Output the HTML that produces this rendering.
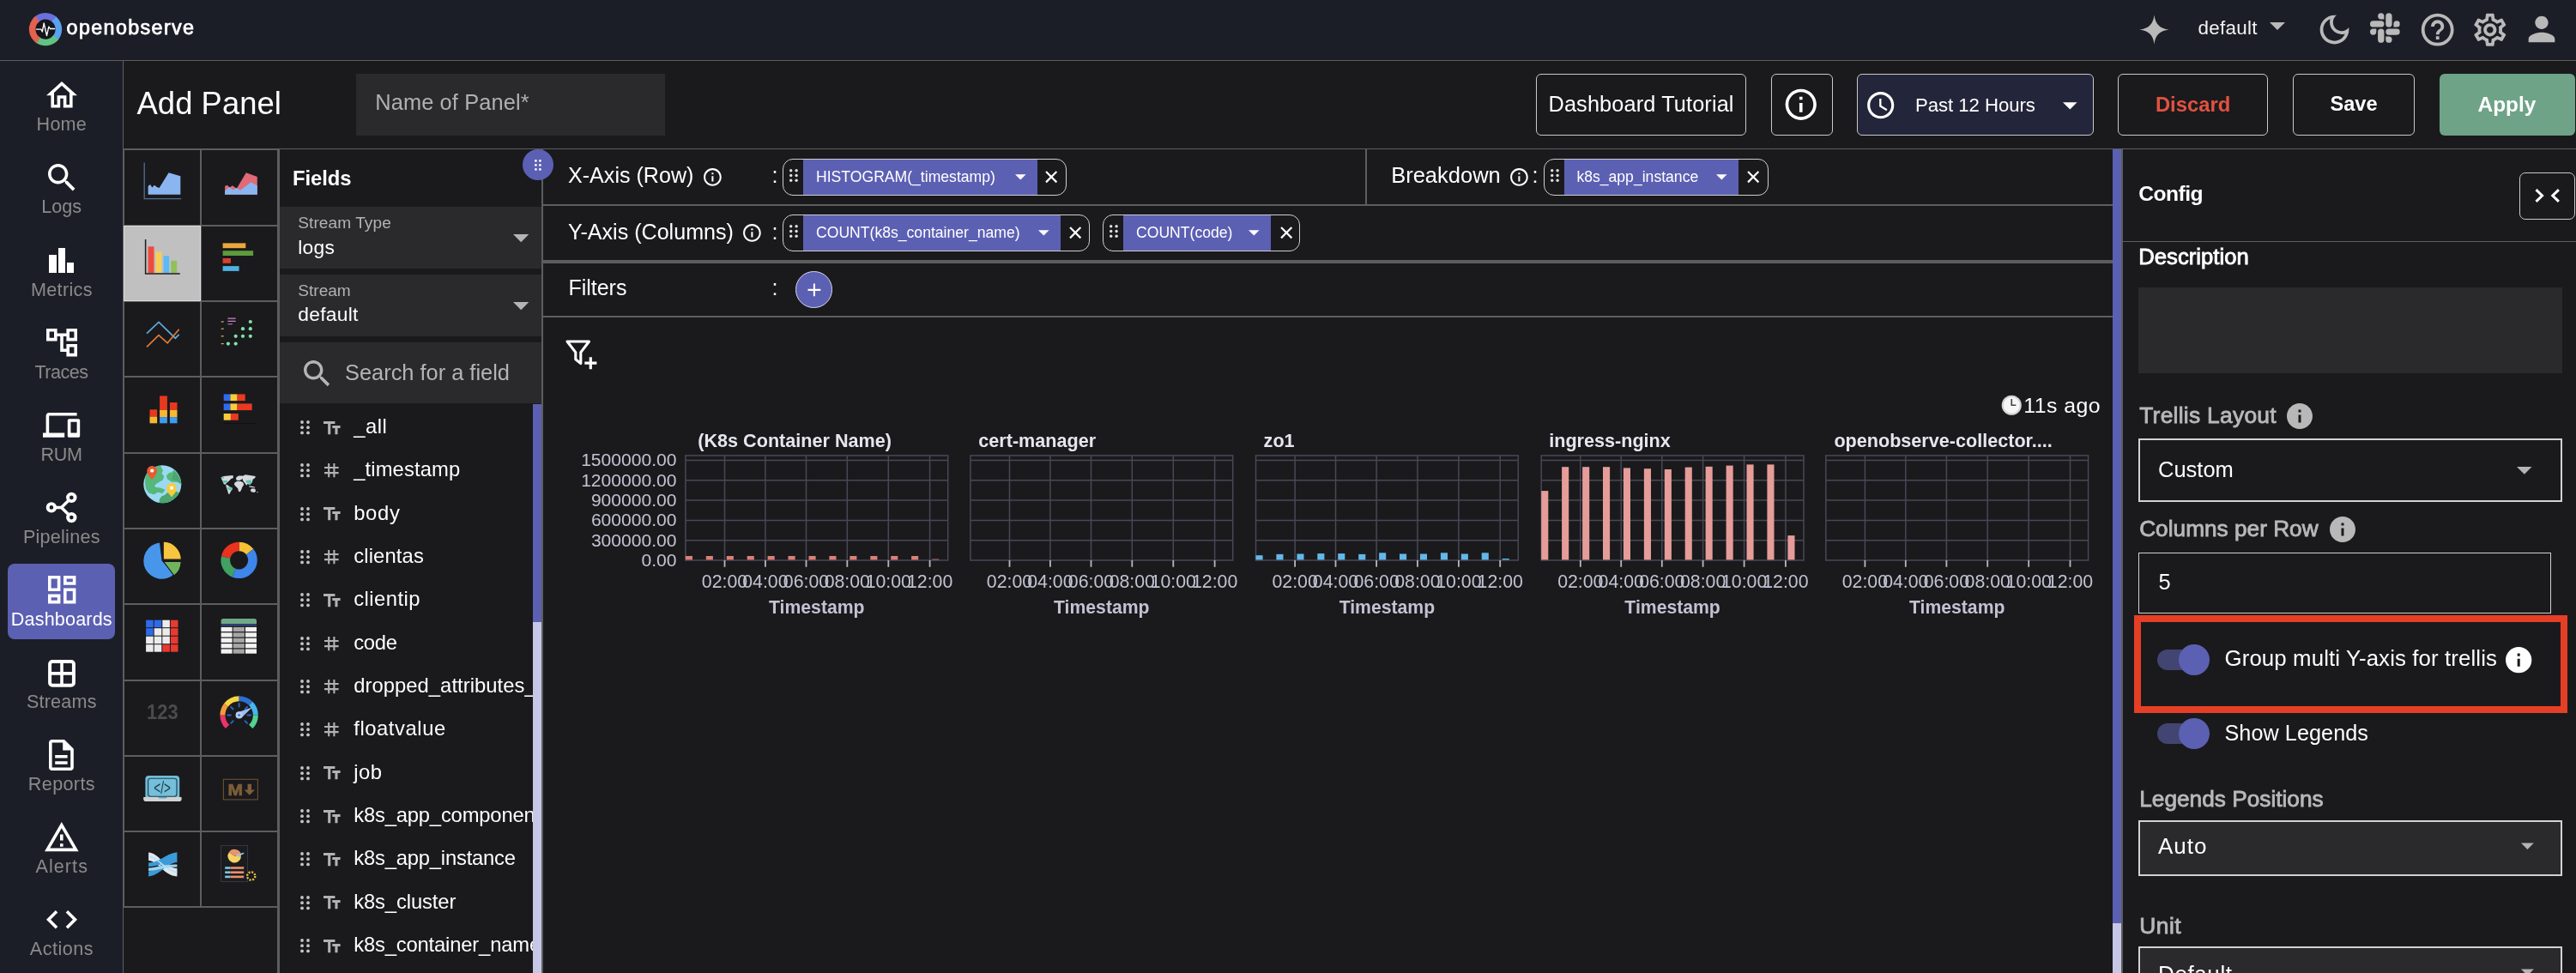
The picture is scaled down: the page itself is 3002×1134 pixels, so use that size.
<!DOCTYPE html>
<html lang="en"><head><meta charset="utf-8"><title>OpenObserve - Add Panel</title>
<style>
html,body{margin:0;padding:0;}
body{width:3002px;height:1134px;overflow:hidden;background:#1a1a1d;font-family:"Liberation Sans", sans-serif;position:relative;}
.a{position:absolute;box-sizing:border-box;}
.t{position:absolute;white-space:nowrap;line-height:1;}
#root{position:absolute;left:0;top:0;width:3002px;height:1134px;will-change:transform;}
svg{display:block;overflow:visible;}
svg text{font-family:"Liberation Sans", sans-serif;}
</style></head><body><div id="root">
<!-- top bar -->
<div class="a" style="left:0.00px;top:0.00px;width:3002.00px;height:70.00px;background:#1c1e27;"></div>
<div class="a" style="left:0.00px;top:70.00px;width:3002.00px;height:1.00px;background:#5c5e5d;"></div>
<svg class="a" style="left:0;top:0" width="120" height="70" viewBox="0 0 120 70"><circle cx="53.0" cy="34.1" r="18.2" fill="#15161c"/><path fill="#6c6fdc" d="M38.29 21.76A19.2 19.2 0 0 1 67.27 21.25L61.62 26.34A11.6 11.6 0 0 0 44.11 26.64Z"/><path fill="#5aa2f0" d="M65.34 19.39A19.2 19.2 0 0 1 65.34 48.81L60.46 42.99A11.6 11.6 0 0 0 60.46 25.21Z"/><path fill="#62c283" d="M68.13 45.92A19.2 19.2 0 0 1 40.15 48.37L45.24 42.72A11.6 11.6 0 0 0 62.14 41.24Z"/><path fill="#e2614f" d="M42.83 50.38A19.2 19.2 0 0 1 41.18 18.97L45.86 24.96A11.6 11.6 0 0 0 46.85 43.94Z"/><path fill="none" stroke="#fff" stroke-width="1.35" stroke-linejoin="round" stroke-linecap="round" d="M42.4 34.1H47.9L49.3 37L51.2 27L54.5 41.6L56.8 31.2L58.6 33.5H63.6"/></svg>
<span class="t" style="top:21.38px;font-size:23.3px;color:#fff;letter-spacing:1.377px;left:77.60px;-webkit-text-stroke:0.75px #fff;">openobserve</span>
<svg class="a" style="left:2493px;top:16.5px" width="35" height="35" viewBox="0 0 24 24"><path fill="#b9b9b9" d="M12 0.3C12.9 7.6 16.4 11.1 23.7 12C16.4 12.9 12.9 16.4 12 23.7C11.1 16.4 7.6 12.9 0.3 12C7.6 11.1 11.1 7.6 12 0.3Z"/></svg>
<span class="t" style="top:22.44px;font-size:22.4px;color:#f2f2f2;letter-spacing:0.29px;left:2561.50px;">default</span>
<svg class="a" style="left:2645px;top:25.7px" width="18" height="9" viewBox="0 0 10 5"><path fill="#b9b9b9" d="M0 0h10L5 5z"/></svg>
<svg class="a" style="left:2697.90px;top:12.20px" width="45" height="45" viewBox="0 0 24 24"><path fill="#b9b9b9" d="M9.37 5.51C9.19 6.15 9.1 6.82 9.1 7.5c0 4.08 3.32 7.4 7.4 7.4.68 0 1.35-.09 1.99-.27C17.45 17.19 14.93 19 12 19c-3.86 0-7-3.14-7-7 0-2.93 1.81-5.45 4.37-6.49zM12 3c-4.97 0-9 4.03-9 9s4.03 9 9 9 9-4.03 9-9c0-.46-.04-.92-.1-1.36-.98 1.37-2.58 2.26-4.4 2.26-2.98 0-5.4-2.42-5.4-5.4 0-1.81.89-3.42 2.26-4.4-.44-.06-.9-.1-1.36-.1z"/></svg>
<svg class="a" style="left:2762.3px;top:15px" width="34.7" height="35" viewBox="0 0 24 24" fill="#b9b9b9"><path d="M5.04 15.17a2.52 2.52 0 1 1-2.52-2.52h2.52zM6.31 15.17a2.52 2.52 0 0 1 5.04 0v6.31a2.52 2.52 0 0 1-5.04 0z"/><path d="M8.83 5.04a2.52 2.52 0 1 1 2.52-2.52v2.52zM8.83 6.31a2.52 2.52 0 0 1 0 5.04H2.52a2.52 2.52 0 0 1 0-5.04z"/><path d="M18.96 8.83a2.52 2.52 0 1 1 2.52 2.52h-2.52zM17.69 8.83a2.52 2.52 0 0 1-5.04 0V2.52a2.52 2.52 0 0 1 5.04 0z"/><path d="M15.17 18.96a2.52 2.52 0 1 1-2.52 2.52v-2.52zM15.17 17.69a2.52 2.52 0 0 1 0-5.04h6.31a2.52 2.52 0 0 1 0 5.04z"/></svg>
<svg class="a" style="left:2818.30px;top:11.70px" width="45.4" height="45.4" viewBox="0 0 24 24"><path fill="#b9b9b9" d="M11 18h2v-2h-2v2zm1-16C6.48 2 2 6.48 2 12s4.48 10 10 10 10-4.48 10-10S17.52 2 12 2zm0 18c-4.41 0-8-3.59-8-8s3.59-8 8-8 8 3.59 8 8-3.59 8-8 8zm0-14c-2.21 0-4 1.79-4 4h2c0-1.1.9-2 2-2s2 .9 2 2c0 2-3 1.75-3 5h2c0-2.25 3-2.5 3-5 0-2.21-1.79-4-4-4z"/></svg>
<svg class="a" style="left:2878.50px;top:11.50px" width="45.6" height="45.6" viewBox="0 0 24 24"><path fill="#b9b9b9" d="M19.43 12.98c.04-.32.07-.64.07-.98 0-.34-.03-.66-.07-.98l2.11-1.65c.19-.15.24-.42.12-.64l-2-3.46c-.09-.16-.26-.25-.44-.25-.06 0-.12.01-.17.03l-2.49 1c-.52-.4-1.08-.73-1.69-.98l-.38-2.65C14.46 2.18 14.25 2 14 2h-4c-.25 0-.46.18-.49.42l-.38 2.65c-.61.25-1.17.59-1.69.98l-2.49-1c-.06-.02-.12-.03-.18-.03-.17 0-.34.09-.43.25l-2 3.46c-.13.22-.07.49.12.64l2.11 1.65c-.04.32-.07.65-.07.98 0 .33.03.66.07.98l-2.11 1.65c-.19.15-.24.42-.12.64l2 3.46c.09.16.26.25.44.25.06 0 .12-.01.17-.03l2.49-1c.52.4 1.08.73 1.69.98l.38 2.65c.03.24.24.42.49.42h4c.25 0 .46-.18.49-.42l.38-2.65c.61-.25 1.17-.59 1.69-.98l2.49 1c.06.02.12.03.18.03.17 0 .34-.09.43-.25l2-3.46c.12-.22.07-.49-.12-.64l-2.11-1.65zm-1.98-1.71c.04.31.05.52.05.73 0 .21-.02.43-.05.73l-.14 1.13.89.7 1.08.84-.7 1.21-1.27-.51-1.04-.42-.9.68c-.43.32-.84.56-1.25.73l-1.06.43-.16 1.13-.2 1.35h-1.4l-.19-1.35-.16-1.13-1.06-.43c-.43-.18-.83-.41-1.23-.71l-.91-.7-1.06.43-1.27.51-.7-1.21 1.08-.84.89-.7-.14-1.13c-.03-.31-.05-.54-.05-.74s.02-.43.05-.73l.14-1.13-.89-.7-1.08-.84.7-1.21 1.27.51 1.04.42.9-.68c.43-.32.84-.56 1.25-.73l1.06-.43.16-1.13.2-1.35h1.39l.19 1.35.16 1.13 1.06.43c.43.18.83.41 1.23.71l.91.7 1.06-.43 1.27-.51.7 1.21-1.07.85-.89.7.14 1.13zM12 8c-2.21 0-4 1.79-4 4s1.79 4 4 4 4-1.79 4-4-1.79-4-4-4zm0 6c-1.1 0-2-.9-2-2s.9-2 2-2 2 .9 2 2-.9 2-2 2z"/></svg>
<svg class="a" style="left:2939.30px;top:11.30px" width="46" height="46" viewBox="0 0 24 24"><path fill="#b9b9b9" d="M12 12c2.21 0 4-1.79 4-4s-1.79-4-4-4-4 1.79-4 4 1.79 4 4 4zm0 2c-2.67 0-8 1.34-8 4v2h16v-2c0-2.66-5.33-4-8-4z"/></svg>
<!-- left nav -->
<div class="a" style="left:0.00px;top:71.00px;width:143.00px;height:1063.00px;background:#1c1e27;"></div>
<div class="a" style="left:143.00px;top:71.00px;width:1.00px;height:1063.00px;background:#5c5e5d;"></div>
<svg class="a" style="left:53.70px;top:94.60px" width="36.00" height="30.60" viewBox="2 3 20 17" preserveAspectRatio="none"><path fill="#fff" d="M12 5.69l5 4.5V18h-2v-6H9v6H7v-7.81l5-4.5M12 3L2 12h3v8h6v-6h2v6h6v-8h3L12 3z"/></svg>
<span class="t" style="top:134.32px;font-size:21.6px;color:#8a8a8a;letter-spacing:0.194px;left:-428.20px;width:1000px;text-align:center;">Home</span>
<svg class="a" style="left:55.50px;top:190.70px" width="31.48" height="31.48" viewBox="3 3 17.49 17.49" preserveAspectRatio="none"><path fill="#fff" d="M15.5 14h-.79l-.28-.27C15.41 12.59 16 11.11 16 9.5 16 5.91 13.09 3 9.5 3S3 5.91 3 9.5 5.91 16 9.5 16c1.61 0 3.09-.59 4.23-1.57l.27.28v.79l5 4.99L20.49 19l-4.99-5zm-6 0C7.01 14 5 11.99 5 9.5S7.01 5 9.5 5 14 7.01 14 9.5 11.99 14 9.5 14z"/></svg>
<span class="t" style="top:230.42px;font-size:21.6px;color:#8a8a8a;letter-spacing:0.02px;left:-428.29px;width:1000px;text-align:center;">Logs</span>
<div class="a" style="left:56.90px;top:297.40px;width:8.70px;height:21.00px;background:#fff;"></div>
<div class="a" style="left:67.60px;top:288.80px;width:8.10px;height:29.60px;background:#fff;"></div>
<div class="a" style="left:78.40px;top:305.70px;width:8.10px;height:12.70px;background:#fff;"></div>
<span class="t" style="top:326.52px;font-size:21.6px;color:#8a8a8a;letter-spacing:0.35px;left:-428.12px;width:1000px;text-align:center;">Metrics</span>
<svg class="a" style="left:53.70px;top:382.90px" width="36.00" height="32.40" viewBox="2 3 20 18" preserveAspectRatio="none"><path fill="#fff" d="M22 11V3h-7v3H9V3H2v8h7V8h2v10h4v3h7v-8h-7v3h-2V8h2v3h7zM7 9H4V5h3v4zm10 6h3v4h-3v-4zm0-10h3v4h-3V5z"/></svg>
<span class="t" style="top:422.62px;font-size:21.6px;color:#8a8a8a;letter-spacing:-0.543px;left:-428.57px;width:1000px;text-align:center;">Traces</span>
<svg class="a" style="left:50.10px;top:480.80px" width="43.20" height="28.80" viewBox="0 4 24 16" preserveAspectRatio="none"><path fill="#fff" d="M4 6h18V4H4c-1.1 0-2 .9-2 2v11H0v3h14v-3H4V6zm19 2h-6c-.55 0-1 .45-1 1v10c0 .55.45 1 1 1h6c.55 0 1-.45 1-1V9c0-.55-.45-1-1-1zm-1 9h-4v-7h4v7z"/></svg>
<span class="t" style="top:518.72px;font-size:21.6px;color:#8a8a8a;letter-spacing:-0.396px;left:-428.50px;width:1000px;text-align:center;">RUM</span>
<svg class="a" style="left:50px;top:570.00px" width="44" height="44" viewBox="50 570 44 44" fill="none" stroke="#fff"><path d="M64 591.4H71.6L80.2 583M71.6 591.4L80.2 600" stroke-width="3.5" stroke-linejoin="round"/><circle cx="59.9" cy="591.4" r="4.25" stroke-width="3.9"/><circle cx="83.3" cy="579.9" r="4.25" stroke-width="3.9"/><circle cx="83.3" cy="603.1" r="4.25" stroke-width="3.9"/></svg>
<span class="t" style="top:614.82px;font-size:21.6px;color:#8a8a8a;letter-spacing:0.23px;left:-428.19px;width:1000px;text-align:center;">Pipelines</span>
<div class="a" style="left:9.00px;top:657.30px;width:125.00px;height:87.60px;background:#5c60b3;border-radius:8px;"></div>
<svg class="a" style="left:55.50px;top:671.20px" width="32.40" height="32.40" viewBox="3 3 18 18" preserveAspectRatio="none"><path fill="#fff" d="M19 5v2h-4V5h4M9 5v6H5V5h4m10 8v6h-4v-6h4M9 17v2H5v-2h4M21 3h-8v6h8V3zM11 3H3v10h8V3zm10 8h-8v10h8V11zm-10 4H3v6h8v-6z"/></svg>
<span class="t" style="top:710.92px;font-size:21.6px;color:#fff;letter-spacing:0.148px;left:-428.23px;width:1000px;text-align:center;">Dashboards</span>
<svg class="a" style="left:55.5px;top:768.50px" width="32" height="31.8" viewBox="0 0 32 32"><rect x="2" y="2" width="28" height="28" rx="3" fill="none" stroke="#fff" stroke-width="4"/><path d="M16 2V30M2 16H30" stroke="#fff" stroke-width="3.6"/></svg>
<span class="t" style="top:807.02px;font-size:21.6px;color:#8a8a8a;letter-spacing:0.18px;left:-428.21px;width:1000px;text-align:center;">Streams</span>
<svg class="a" style="left:57.30px;top:861.60px" width="28.80" height="36.00" viewBox="4 2 16 20" preserveAspectRatio="none"><path fill="#fff" d="M8 16h8v2H8zm0-4h8v2H8zm6-10H6c-1.1 0-2 .9-2 2v16c0 1.1.89 2 1.99 2H18c1.1 0 2-.9 2-2V8l-6-6zm4 18H6V4h7v5h5v11z"/></svg>
<span class="t" style="top:903.12px;font-size:21.6px;color:#8a8a8a;letter-spacing:0.344px;left:-428.13px;width:1000px;text-align:center;">Reports</span>
<svg class="a" style="left:51.90px;top:957.70px" width="39.60" height="34.20" viewBox="1 2 22 19" preserveAspectRatio="none"><path fill="#fff" d="M12 5.99L19.53 19H4.47L12 5.99M12 2L1 21h22L12 2zm1 14h-2v2h2v-2zm0-6h-2v4h2v-4z"/></svg>
<span class="t" style="top:999.22px;font-size:21.6px;color:#8a8a8a;letter-spacing:1.077px;left:-427.76px;width:1000px;text-align:center;">Alerts</span>
<svg class="a" style="left:53.70px;top:1061.00px" width="36.00" height="21.60" viewBox="2 6 20 12" preserveAspectRatio="none"><path fill="#fff" d="M9.4 16.6L4.8 12l4.6-4.6L8 6l-6 6 6 6 1.4-1.4zm5.2 0l4.6-4.6-4.6-4.6L16 6l6 6-6 6-1.4-1.4z"/></svg>
<span class="t" style="top:1095.32px;font-size:21.6px;color:#8a8a8a;letter-spacing:0.494px;left:-428.05px;width:1000px;text-align:center;">Actions</span>
<!-- header row -->
<div class="a" style="left:144.00px;top:173.00px;width:2858.00px;height:1.00px;background:#5c5e5d;"></div>
<span class="t" style="top:103.09px;font-size:36.4px;color:#fff;letter-spacing:0.065px;left:159.50px;">Add Panel</span>
<div class="a" style="left:415.00px;top:86.30px;width:360.00px;height:71.50px;background:#2a2a2d;"></div>
<span class="t" style="top:106.80px;font-size:25.4px;color:#b0b0b0;letter-spacing:0.123px;left:437.20px;">Name of Panel*</span>
<div class="a" style="left:1790.00px;top:86.00px;width:244.50px;height:72.00px;border:1.5px solid #c9c9c9;border-radius:6px;"></div>
<span class="t" style="top:109.48px;font-size:25.3px;color:#fff;letter-spacing:0.131px;left:1804.50px;">Dashboard Tutorial</span>
<div class="a" style="left:2064.00px;top:86.00px;width:72.00px;height:72.00px;border:1.5px solid #c9c9c9;border-radius:6px;"></div>
<svg class="a" style="left:2077.25px;top:100.45px" width="43.5" height="43.5" viewBox="0 0 24 24"><path fill="#fff" d="M11 7h2v2h-2zm0 4h2v6h-2zm1-9C6.48 2 2 6.48 2 12s4.48 10 10 10 10-4.48 10-10S17.52 2 12 2zm0 18c-4.41 0-8-3.59-8-8s3.59-8 8-8 8 3.59 8 8-3.59 8-8 8z"/></svg>
<div class="a" style="left:2164.00px;top:86.00px;width:275.60px;height:72.00px;border:1.5px solid #c9c9c9;border-radius:6px;background:#23253a;"></div>
<svg class="a" style="left:2173.30px;top:103.90px" width="37.4" height="37.4" viewBox="0 0 24 24"><path fill="#fff" d="M11.99 2C6.47 2 2 6.48 2 12s4.47 10 9.99 10C17.52 22 22 17.52 22 12S17.52 2 11.99 2zM12 20c-4.42 0-8-3.58-8-8s3.58-8 8-8 8 3.58 8 8-3.58 8-8 8zm.5-13H11v6l5.25 3.15.75-1.23-4.5-2.67z"/></svg>
<span class="t" style="top:111.51px;font-size:22.2px;color:#fff;letter-spacing:-0.056px;left:2232.00px;">Past 12 Hours</span>
<svg class="a" style="left:2404.2px;top:119px" width="16.6" height="8.6" viewBox="0 0 10 5"><path fill="#fff" d="M0 0h10L5 5z"/></svg>
<div class="a" style="left:2468.00px;top:86.00px;width:175.00px;height:72.00px;border:1.5px solid #c9c9c9;border-radius:6px;"></div>
<span class="t" style="top:110.15px;font-size:23.8px;color:#e2523f;font-weight:700;left:2055.60px;width:1000px;text-align:center;">Discard</span>
<div class="a" style="left:2672.00px;top:86.00px;width:142.00px;height:72.00px;border:1.5px solid #c9c9c9;border-radius:6px;"></div>
<span class="t" style="top:110.32px;font-size:23.6px;color:#fff;font-weight:700;left:2243.00px;width:1000px;text-align:center;">Save</span>
<div class="a" style="left:2843.00px;top:86.00px;width:157.50px;height:72.00px;background:#6ea388;border-radius:6px;"></div>
<span class="t" style="top:109.65px;font-size:24.4px;color:#fff;font-weight:700;left:2421.50px;width:1000px;text-align:center;">Apply</span>
<!-- chart types -->
<div class="a" style="left:144.00px;top:174.00px;width:1.00px;height:884.00px;background:#5c5e5d;"></div>
<div class="a" style="left:144.00px;top:174.00px;width:179.00px;height:1.00px;background:#5c5e5d;"></div>
<div class="a" style="left:144.00px;top:262.00px;width:180.00px;height:2.00px;background:#5c5e5d;"></div>
<div class="a" style="left:144.00px;top:350.00px;width:180.00px;height:2.00px;background:#5c5e5d;"></div>
<div class="a" style="left:144.00px;top:438.00px;width:180.00px;height:2.00px;background:#5c5e5d;"></div>
<div class="a" style="left:144.00px;top:527.00px;width:180.00px;height:2.00px;background:#5c5e5d;"></div>
<div class="a" style="left:144.00px;top:615.00px;width:180.00px;height:2.00px;background:#5c5e5d;"></div>
<div class="a" style="left:144.00px;top:703.00px;width:180.00px;height:2.00px;background:#5c5e5d;"></div>
<div class="a" style="left:144.00px;top:792.00px;width:180.00px;height:2.00px;background:#5c5e5d;"></div>
<div class="a" style="left:144.00px;top:880.00px;width:180.00px;height:2.00px;background:#5c5e5d;"></div>
<div class="a" style="left:144.00px;top:968.00px;width:180.00px;height:2.00px;background:#5c5e5d;"></div>
<div class="a" style="left:144.00px;top:1056.00px;width:180.00px;height:2.00px;background:#5c5e5d;"></div>
<div class="a" style="left:233.00px;top:174.00px;width:2.00px;height:884.00px;background:#5c5e5d;"></div>
<div class="a" style="left:144.00px;top:263.00px;width:90.00px;height:88.00px;background:#c0c0c0;border:1px solid #dcdcdc;"></div>
<svg class="a" style="left:167.00px;top:189.40px" width="45" height="45" viewBox="0 0 45 45"><path d="M1.2 0.5V42.6H44.2" fill="none" stroke="#4f6f94" stroke-width="1.3"/><polygon fill="#8bb5f0" points="5.6,37.7 5.6,28 8.1,26.1 10.3,29.4 13,26.7 15.8,28.9 18.6,30 29.6,12.3 43.3,16.2 43.3,37.7"/></svg>
<svg class="a" style="left:256.00px;top:189.40px" width="45" height="45" viewBox="0 0 45 45"><polygon fill="#e06a75" points="6.1,37.7 6.1,28 8.8,26.7 11.6,29.4 14.9,27.2 19.8,30.8 30.8,12.3 43.8,17 43.8,37.7"/><polygon fill="#8bb5f0" points="6.1,37.7 6.1,33.6 11,28.9 15.7,32.2 19.8,30 24,32.8 36.3,23.4 43.8,27.2 43.8,37.7"/></svg>
<svg class="a" style="left:167.00px;top:277.80px" width="45" height="45" viewBox="0 0 45 45"><rect x="5.6" y="9.3" width="6.9" height="30.8" fill="#ee4b3f"/><rect x="14.4" y="15.3" width="6.9" height="24.8" fill="#f9ce56"/><rect x="23.5" y="20.3" width="6.6" height="19.8" fill="#5bb9f7"/><rect x="32.3" y="25.8" width="6.9" height="14.3" fill="#8fc25a"/><path d="M2.6 1V41H42.8" fill="none" stroke="#1e1e1e" stroke-width="1.5"/></svg>
<svg class="a" style="left:256.00px;top:277.80px" width="45" height="45" viewBox="0 0 45 45"><rect x="3.6" y="5.4" width="26.7" height="5.8" fill="#eaa93b"/><rect x="3.6" y="14.2" width="35.5" height="5.8" fill="#5c9c3b"/><rect x="3.6" y="23" width="9.3" height="5.8" fill="#d6402e"/><rect x="3.6" y="32.1" width="19" height="5.8" fill="#4fb1e2"/></svg>
<svg class="a" style="left:167.00px;top:366.10px" width="45" height="45" viewBox="0 0 45 45"><polyline fill="none" stroke="#5aaade" stroke-width="1.7" points="4,22.7 18,9.5 37.3,28.2 41.7,23.8"/><polyline fill="none" stroke="#e07a3a" stroke-width="1.7" points="4,38.4 18,24.7 28.2,33.8 41.7,17.8"/></svg>
<svg class="a" style="left:256.00px;top:366.10px" width="45" height="45" viewBox="0 0 45 45"><circle cx="35.8" cy="9" r="2.1" fill="#7fe3ab"/><circle cx="27" cy="17.2" r="2.1" fill="#7fe3ab"/><circle cx="35.8" cy="17.2" r="2.1" fill="#7fe3ab"/><circle cx="18.7" cy="25.8" r="2.1" fill="#7fe3ab"/><circle cx="27" cy="25.8" r="2.1" fill="#7fe3ab"/><circle cx="35.8" cy="25.8" r="2.1" fill="#7fe3ab"/><circle cx="9.9" cy="34.6" r="2.1" fill="#7fe3ab"/><circle cx="18.7" cy="34.6" r="2.1" fill="#7fe3ab"/><rect x="1.7" y="8.4" width="3" height="1.2" fill="#e0b070"/><rect x="1.7" y="16.599999999999998" width="3" height="1.2" fill="#e0b070"/><rect x="1.7" y="25.2" width="3" height="1.2" fill="#e0b070"/><rect x="1.7" y="34.0" width="3" height="1.2" fill="#e0b070"/><path d="M9.4 5.1H18.7M9.4 8.4H18.7M9.4 11.7H14.9" stroke="#d184c4" stroke-width="1.1"/></svg>
<svg class="a" style="left:167.00px;top:453.60px" width="45" height="45" viewBox="0 0 45 45"><rect x="7.5" y="23.3" width="8.6" height="8.3" fill="#e8391f"/><rect x="7.5" y="31.6" width="8.6" height="7.7" fill="#f7b733"/><rect x="19.1" y="7.4" width="8.8" height="16.5" fill="#e8391f"/><rect x="19.1" y="23.9" width="8.8" height="8.2" fill="#f7b733"/><rect x="19.1" y="32.1" width="8.8" height="7.2" fill="#3d9cf0"/><rect x="30.9" y="15.1" width="8.6" height="8.8" fill="#e8391f"/><rect x="30.9" y="23.9" width="8.6" height="8.2" fill="#f7b733"/><rect x="30.9" y="32.1" width="8.6" height="7.2" fill="#3d9cf0"/></svg>
<svg class="a" style="left:256.00px;top:453.60px" width="45" height="45" viewBox="0 0 45 45"><rect x="4.7" y="5.4" width="7.7" height="7.7" fill="#2f6bf0"/><rect x="12.4" y="5.4" width="8.2" height="7.7" fill="#f7cd3f"/><rect x="20.6" y="5.4" width="9.1" height="7.7" fill="#e83a20"/><rect x="4.7" y="16.4" width="7.7" height="7.7" fill="#2f6bf0"/><rect x="12.4" y="16.4" width="8.2" height="7.7" fill="#f7cd3f"/><rect x="20.6" y="16.4" width="17.1" height="7.7" fill="#e83a20"/><rect x="4.7" y="28" width="8.2" height="7.7" fill="#f7cd3f"/><rect x="12.9" y="28" width="8.9" height="7.7" fill="#e83a20"/><rect x="4.7" y="39" width="37" height="0.8" fill="#101012"/></svg>
<svg class="a" style="left:167.00px;top:543.00px" width="45" height="45" viewBox="0 0 45 45"><defs><clipPath id="gclip"><circle cx="22.3" cy="21.3" r="22"/></clipPath></defs><circle cx="22.3" cy="21.3" r="22" fill="#9bd9f2"/><g clip-path="url(#gclip)"><polygon fill="#55b87a" points="3.78,8.84 9.46,3.16 19.07,0.10 22.12,5.35 20.38,8.84 23.44,12.33 22.12,15.83 16.88,18.89 12.52,21.94 13.39,25.44 19.50,26.31 24.31,28.06 22.12,31.12 16.88,29.81 12.08,32.43 6.84,30.68 3.78,26.31 2.91,20.20 3.17,13.21" stroke="#55b87a" stroke-width="1.6" stroke-linejoin="round"/><polygon fill="#55b87a" points="35.67,5.78 39.16,9.28 42.22,14.08 44.14,20.63 39.16,17.58 33.48,18.01 28.68,14.95 27.80,11.46 30.42,8.84 33.92,7.97" stroke="#55b87a" stroke-width="1.6" stroke-linejoin="round"/><polygon fill="#4ba671" points="35.67,5.78 39.16,9.28 42.22,14.08 44.14,20.63 39.16,17.58 33.48,15.83"/><polygon fill="#4ba671" points="19.07,42.91 19.50,38.98 21.69,35.92 25.18,34.61 27.37,32.43 30.86,30.68 37.41,29.98 41.61,31.73 38.29,36.79 32.17,41.60 25.18,43.61" stroke="#4ba671" stroke-width="1.2" stroke-linejoin="round"/></g><path fill="#e95a32" d="M4.26 5.90A5.90 5.90 0 1 1 16.06 5.90C16.06 10.33 12.22 12.76 10.16 16.30C8.10 12.76 4.26 10.33 4.26 5.90Z"/><circle cx="10.16" cy="5.60" r="2.12" fill="#fff"/><path fill="#f8cb3a" d="M27.14 25.95A5.90 5.90 0 1 1 38.94 25.95C38.94 30.38 35.10 33.06 33.04 36.60C30.97 33.06 27.14 30.38 27.14 25.95Z"/><circle cx="33.04" cy="25.65" r="2.12" fill="#fff"/></svg>
<svg class="a" style="left:256.00px;top:543.00px" width="45" height="45" viewBox="0 0 45 45"><g fill="#d6dade"><polygon points="1.54,13.21 4.60,11.90 9.84,11.46 15.52,11.02 15.95,14.08 13.33,14.95 11.15,17.14 8.96,19.32 7.22,20.63 6.34,21.94 4.60,20.63 3.29,17.58 1.98,14.95"/><polygon points="7.22,21.51 9.84,22.82 11.58,24.13 14.64,25.44 14.64,27.62 12.90,29.81 11.58,32.43 10.71,33.30 9.84,31.55 8.96,28.06 7.65,24.56"/><polygon points="19.45,13.21 22.07,11.46 26.44,11.46 28.18,13.21 25.56,15.83 22.94,17.14 19.88,16.70 19.01,14.95"/><polygon points="17.70,19.32 20.32,18.01 24.69,18.01 27.31,19.32 28.18,21.94 26.44,24.56 25.13,28.06 23.82,30.24 22.07,29.81 21.19,26.31 18.57,23.69 16.83,21.51"/><polygon points="26.44,11.90 29.93,10.15 35.17,11.02 41.72,11.90 41.29,14.08 38.67,15.83 37.79,19.32 35.17,21.94 32.55,21.07 31.24,22.82 29.49,20.20 27.31,17.58 26.44,14.95"/><polygon points="34.30,23.25 37.79,23.69 41.29,24.74 40.85,25.61 36.92,25.09 34.47,24.39"/><polygon points="35.61,28.06 37.79,26.31 41.29,26.75 42.16,29.37 40.41,31.12 36.92,30.24"/><polygon points="43.47,29.81 44.61,30.24 44.43,31.55 43.56,31.12"/></g><g fill="#5fc4b2"><polygon points="1.80,13.21 4.77,12.51 5.29,14.26 2.67,14.95"/><polygon points="3.55,17.31 8.79,16.70 9.14,18.97 6.87,20.02 4.25,19.32"/><polygon points="8.79,24.39 14.56,25.44 14.56,27.71 12.98,28.76 9.66,27.36"/><polygon points="30.37,16.88 36.74,16.35 37.09,20.02 34.47,20.90 30.98,19.50"/><polygon points="19.45,15.83 21.89,16.35 21.37,17.40 19.62,17.05"/></g></svg>
<svg class="a" style="left:167.00px;top:631.40px" width="45" height="45" viewBox="0 0 45 45"><path fill="#4896eb"  d="M21.5 22.6L36.49 37.59A21.2 21.2 0 1 1 18.92 1.56Z"/><path fill="#f8c541" stroke="#19191c" stroke-width="1.2" d="M23.2 21.2L23.20 0.00A21.2 21.2 0 0 1 44.40 21.20Z"/><path fill="#70b55d" stroke="#19191c" stroke-width="1.2" d="M23.4 23.4L44.20 23.40A20.8 20.8 0 0 1 35.92 40.01Z"/></svg>
<svg class="a" style="left:256.00px;top:631.40px" width="45" height="45" viewBox="0 0 45 45"><path fill="#f8c134"  d="M22.60 0.70A21.2 21.2 0 0 1 39.31 8.85L30.95 15.37A10.6 10.6 0 0 0 22.60 11.30Z"/><path fill="#3e86ea"  d="M39.31 8.85A21.2 21.2 0 0 1 14.32 41.41L18.46 31.66A10.6 10.6 0 0 0 30.95 15.37Z"/><path fill="#40a162"  d="M14.32 41.41A21.2 21.2 0 0 1 1.94 17.13L12.27 19.52A10.6 10.6 0 0 0 18.46 31.66Z"/><path fill="#e9331f"  d="M1.94 17.13A21.2 21.2 0 0 1 22.60 0.70L22.60 11.30A10.6 10.6 0 0 0 12.27 19.52Z"/></svg>
<svg class="a" style="left:167.00px;top:719.60px" width="45" height="45" viewBox="0 0 45 45"><rect x="3.1" y="2.7" width="8.6" height="8.5" fill="#2f6be8"/><rect x="12.7" y="2.7" width="8.6" height="8.5" fill="#2f6be8"/><rect x="22.3" y="2.7" width="8.6" height="8.5" fill="#ececec"/><rect x="31.9" y="2.7" width="8.6" height="8.5" fill="#e83a30"/><rect x="3.1" y="12.2" width="8.6" height="8.5" fill="#2f6be8"/><rect x="12.7" y="12.2" width="8.6" height="8.5" fill="#ececec"/><rect x="22.3" y="12.2" width="8.6" height="8.5" fill="#ececec"/><rect x="31.9" y="12.2" width="8.6" height="8.5" fill="#e83a30"/><rect x="3.1" y="21.7" width="8.6" height="8.5" fill="#ececec"/><rect x="12.7" y="21.7" width="8.6" height="8.5" fill="#ececec"/><rect x="22.3" y="21.7" width="8.6" height="8.5" fill="#ececec"/><rect x="31.9" y="21.7" width="8.6" height="8.5" fill="#e83a30"/><rect x="3.1" y="31.2" width="8.6" height="8.5" fill="#ececec"/><rect x="12.7" y="31.2" width="8.6" height="8.5" fill="#ececec"/><rect x="22.3" y="31.2" width="8.6" height="8.5" fill="#e83a30"/><rect x="31.9" y="31.2" width="8.6" height="8.5" fill="#e83a30"/></svg>
<svg class="a" style="left:256.00px;top:719.60px" width="45" height="45" viewBox="0 0 45 45"><path d="M4 0.9H40.6C42 0.9 43 2 43 3.4V7.2H1.6V3.4C1.6 2 2.6 0.9 4 0.9Z" fill="#6fa98a"/><rect x="1.6" y="8.3" width="41.4" height="1" fill="#3c5ad8"/><rect x="1.6" y="10.9" width="13" height="5.2" fill="#f2f2f2"/><rect x="15.7" y="10.9" width="13.2" height="5.2" fill="#a6a6a6"/><rect x="30" y="10.9" width="13" height="5.2" fill="#f2f2f2"/><rect x="1.6" y="17.3" width="13" height="5.2" fill="#f2f2f2"/><rect x="15.7" y="17.3" width="13.2" height="5.2" fill="#a6a6a6"/><rect x="30" y="17.3" width="13" height="5.2" fill="#f2f2f2"/><rect x="1.6" y="23.7" width="13" height="5.2" fill="#f2f2f2"/><rect x="15.7" y="23.7" width="13.2" height="5.2" fill="#a6a6a6"/><rect x="30" y="23.7" width="13" height="5.2" fill="#f2f2f2"/><rect x="1.6" y="30.1" width="13" height="5.2" fill="#f2f2f2"/><rect x="15.7" y="30.1" width="13.2" height="5.2" fill="#a6a6a6"/><rect x="30" y="30.1" width="13" height="5.2" fill="#f2f2f2"/><rect x="1.6" y="36.5" width="13" height="5.2" fill="#f2f2f2"/><rect x="15.7" y="36.5" width="13.2" height="5.2" fill="#a6a6a6"/><rect x="30" y="36.5" width="13" height="5.2" fill="#f2f2f2"/></svg>
<svg class="a" style="left:167.00px;top:808.60px" width="45" height="45" viewBox="0 0 45 45"><text x="4.0" y="28.5" font-size="24.6" font-weight="700" fill="#4b4b4d" textLength="36.6" lengthAdjust="spacingAndGlyphs">123</text></svg>
<svg class="a" style="left:256.00px;top:808.60px" width="45" height="45" viewBox="0 0 45 45"><path fill="#e9346b"  d="M6.95 40.10A22.2 22.2 0 0 1 0.45 24.40L6.45 24.40A16.2 16.2 0 0 0 11.19 35.86Z"/><path fill="#f39b3e"  d="M0.45 24.40A22.2 22.2 0 0 1 5.16 10.73L9.88 14.43A16.2 16.2 0 0 0 6.45 24.40Z"/><path fill="#f9d53e"  d="M5.16 10.73A22.2 22.2 0 0 1 22.65 2.20L22.65 8.20A16.2 16.2 0 0 0 9.88 14.43Z"/><path fill="#2c70d2"  d="M22.65 2.20A22.2 22.2 0 0 1 38.35 8.70L34.11 12.94A16.2 16.2 0 0 0 22.65 8.20Z"/><path fill="#44b5ef"  d="M38.35 8.70A22.2 22.2 0 0 1 44.85 24.40L38.85 24.40A16.2 16.2 0 0 0 34.11 12.94Z"/><path fill="#53d191"  d="M44.85 24.40A22.2 22.2 0 0 1 38.35 40.10L34.11 35.86A16.2 16.2 0 0 0 38.85 24.40Z"/><path d="M15.72 31.33L13.17 33.88" stroke="#2563c0" stroke-width="2" stroke-linecap="round"/><path d="M12.85 24.40L9.25 24.40" stroke="#2563c0" stroke-width="2" stroke-linecap="round"/><path d="M15.72 17.47L13.17 14.92" stroke="#2563c0" stroke-width="2" stroke-linecap="round"/><path d="M22.65 14.60L22.65 11.00" stroke="#2563c0" stroke-width="2" stroke-linecap="round"/><path d="M29.58 17.47L32.13 14.92" stroke="#2563c0" stroke-width="2" stroke-linecap="round"/><path d="M32.45 24.40L36.05 24.40" stroke="#2563c0" stroke-width="2" stroke-linecap="round"/><path d="M29.58 31.33L32.13 33.88" stroke="#2563c0" stroke-width="2" stroke-linecap="round"/><path d="M21.05 21.20L38.05 15.20L25.25 27.80Z" fill="#9dbdec"/><circle cx="22.65" cy="24.4" r="4.1" fill="#b3cbf0"/><circle cx="22.65" cy="24.4" r="1.2" fill="#2563c0"/></svg>
<svg class="a" style="left:167.00px;top:896.60px" width="45" height="45" viewBox="0 0 45 45"><path d="M6 7H38.6C40.6 7 42.2 8.6 42.2 10.6V32H2.4V10.6C2.4 8.6 4 7 6 7Z" fill="#70bcd7"/><rect x="5.6" y="10.2" width="33.4" height="21" rx="3" fill="#74bfd9" stroke="#22414c" stroke-width="1.15"/><path d="M0.2 32H44.6V34.4C44.6 35.9 43.4 37 41.9 37H2.9C1.4 37 0.2 35.9 0.2 34.4Z" fill="#d2d2d2"/><path d="M17.2 32H27.6L26.6 33.6H18.2Z" fill="#5fa9c4"/><text x="22.1" y="27.6" font-size="19.5" text-anchor="middle" fill="#1f3a44" textLength="19.6" lengthAdjust="spacingAndGlyphs">&lt;/&gt;</text></svg>
<svg class="a" style="left:256.00px;top:896.60px" width="45" height="45" viewBox="0 0 45 45"><rect x="4.4" y="11.3" width="40" height="23.6" fill="none" stroke="#6a5130" stroke-width="1.1"/><text x="9.6" y="29.6" font-size="18.2" font-weight="700" fill="#7d5e37" stroke="#7d5e37" stroke-width="0.7" textLength="17.6" lengthAdjust="spacingAndGlyphs">M</text><path d="M32.6 16.8H37V23.4H41L34.8 29.8L28.6 23.4H32.6Z" fill="#7d5e37"/></svg>
<svg class="a" style="left:167.00px;top:984.60px" width="45" height="45" viewBox="0 0 45 45"><path d="M6.1 8.5C18 9 24 26 39.4 27V36.4C24 35.5 18 19 6.1 18Z" fill="#e9f3fa" opacity="0.95"/><path d="M6.1 20.5C18 21 26 10 39.4 8.3V20C27 21 19 35.5 6.1 36.4V30.5C15 29.5 18 24 22 22C17 23.5 12 25 6.1 25Z" fill="#3b9bd9"/><path d="M6.1 26.5C16 26 24 22 39.4 22.5V25.5C25 25 17 30 6.1 30Z" fill="#9fd3ee"/><path d="M6.1 13C18 14 25 30 39.4 31.5" fill="none" stroke="#b9dff3" stroke-width="1.6"/></svg>
<svg class="a" style="left:256.00px;top:984.60px" width="45" height="45" viewBox="0 0 45 45"><rect x="1.6" y="0.4" width="31" height="42.2" fill="#1b1c1f" stroke="#3a3d42" stroke-width="0.9"/><path fill="#f6d262"  d="M17.2 12.6L24.97 13.28A7.8 7.8 0 1 1 10.81 8.13Z"/><path fill="#e9946f"  d="M17.2 12.6L10.81 8.13A7.8 7.8 0 0 1 24.97 13.28Z"/><path d="M19 11.6L28.4 8.4L28 10.2L20 13.2Z" fill="#8fd0e6"/><rect x="6.2" y="25.2" width="6.2" height="2.6" fill="#7cc6e2"/><rect x="12.4" y="25.2" width="15.8" height="2.6" fill="#e9906c"/><rect x="6.2" y="30.4" width="6.2" height="2.6" fill="#7cc6e2"/><rect x="12.4" y="30.4" width="15.8" height="2.6" fill="#e9906c"/><rect x="6.2" y="35.6" width="6.2" height="2.6" fill="#7cc6e2"/><rect x="12.4" y="35.6" width="15.8" height="2.6" fill="#e9906c"/><circle cx="36.7" cy="36" r="4.6" fill="none" stroke="#e8c443" stroke-width="2.4" stroke-dasharray="2.0 1.6"/></svg>
<!-- fields panel -->
<div class="a" style="left:323.00px;top:174.00px;width:3.00px;height:960.00px;background:#5c5e5d;"></div>
<div class="a" style="left:631.00px;top:174.00px;width:2.00px;height:960.00px;background:#5c5e5d;"></div>
<span class="t" style="top:195.75px;font-size:23.8px;color:#fff;font-weight:700;letter-spacing:-0.055px;left:341.00px;">Fields</span>
<div class="a" style="left:326.00px;top:240.70px;width:305.00px;height:72.10px;background:#2a2a2d;"></div>
<span class="t" style="top:250.43px;font-size:19.1px;color:#b2b2b2;letter-spacing:0.056px;left:347.30px;">Stream Type</span>
<span class="t" style="top:276.60px;font-size:22.8px;color:#fff;letter-spacing:0.224px;left:347.30px;">logs</span>
<svg class="a" style="left:598px;top:272.6px" width="18.4" height="9.2" viewBox="0 0 10 5"><path fill="#b4b4b4" d="M0 0h10L5 5z"/></svg>
<div class="a" style="left:326.00px;top:319.80px;width:305.00px;height:72.30px;background:#2a2a2d;"></div>
<span class="t" style="top:329.43px;font-size:19.1px;color:#b2b2b2;letter-spacing:-0.013px;left:347.30px;">Stream</span>
<span class="t" style="top:354.50px;font-size:22.8px;color:#fff;letter-spacing:0.257px;left:347.30px;">default</span>
<svg class="a" style="left:598px;top:352.3px" width="18.4" height="9.2" viewBox="0 0 10 5"><path fill="#b4b4b4" d="M0 0h10L5 5z"/></svg>
<div class="a" style="left:326.00px;top:398.80px;width:305.00px;height:71.70px;background:#2a2a2d;"></div>
<svg class="a" style="left:353.50px;top:420.20px" width="30.20" height="30.20" viewBox="3 3 17.49 17.49" preserveAspectRatio="none"><path fill="#b4b4b4" d="M15.5 14h-.79l-.28-.27C15.41 12.59 16 11.11 16 9.5 16 5.91 13.09 3 9.5 3S3 5.91 3 9.5 5.91 16 9.5 16c1.61 0 3.09-.59 4.23-1.57l.27.28v.79l5 4.99L20.49 19l-4.99-5zm-6 0C7.01 14 5 11.99 5 9.5S7.01 5 9.5 5 14 7.01 14 9.5 11.99 14 9.5 14z"/></svg>
<span class="t" style="top:421.80px;font-size:25.4px;color:#b4b4b4;left:402.00px;">Search for a field</span>
<div class="a" style="left:326px;top:470.5px;width:295px;height:663.5px;overflow:hidden;">
<svg class="a" style="left:24.3px;top:19.50px" width="11" height="16.4" viewBox="0 0 11 16.4" fill="#c4c4c4"><circle cx="2" cy="2" r="1.9"/><circle cx="9" cy="2" r="1.9"/><circle cx="2" cy="8.2" r="1.9"/><circle cx="9" cy="8.2" r="1.9"/><circle cx="2" cy="14.4" r="1.9"/><circle cx="9" cy="14.4" r="1.9"/></svg>
<svg class="a" style="left:50.9px;top:20.10px" width="19.6" height="15.2" viewBox="2.5 4 19 15" preserveAspectRatio="none"><path fill="#b2b2b2" d="M2.5 4v3h5v12h3V7h5V4h-13zm19 5h-9v3h3v7h3v-7h3V9z"/></svg>
<span class="t" style="top:14.65px;font-size:23.8px;color:#fff;letter-spacing:0.55px;left:86.20px;">_all</span>
<svg class="a" style="left:24.3px;top:69.83px" width="11" height="16.4" viewBox="0 0 11 16.4" fill="#c4c4c4"><circle cx="2" cy="2" r="1.9"/><circle cx="9" cy="2" r="1.9"/><circle cx="2" cy="8.2" r="1.9"/><circle cx="9" cy="8.2" r="1.9"/><circle cx="2" cy="14.4" r="1.9"/><circle cx="9" cy="14.4" r="1.9"/></svg>
<svg class="a" style="left:52.2px;top:69.93px" width="16.6" height="16.2" viewBox="4 4 16 16" preserveAspectRatio="none"><path fill="#b2b2b2" d="M20 10V8h-4V4h-2v4h-4V4H8v4H4v2h4v4H4v2h4v4h2v-4h4v4h2v-4h4v-2h-4v-4h4zm-6 4h-4v-4h4v4z"/></svg>
<span class="t" style="top:64.98px;font-size:23.8px;color:#fff;letter-spacing:0.111px;left:86.20px;">_timestamp</span>
<svg class="a" style="left:24.3px;top:120.16px" width="11" height="16.4" viewBox="0 0 11 16.4" fill="#c4c4c4"><circle cx="2" cy="2" r="1.9"/><circle cx="9" cy="2" r="1.9"/><circle cx="2" cy="8.2" r="1.9"/><circle cx="9" cy="8.2" r="1.9"/><circle cx="2" cy="14.4" r="1.9"/><circle cx="9" cy="14.4" r="1.9"/></svg>
<svg class="a" style="left:50.9px;top:120.76px" width="19.6" height="15.2" viewBox="2.5 4 19 15" preserveAspectRatio="none"><path fill="#b2b2b2" d="M2.5 4v3h5v12h3V7h5V4h-13zm19 5h-9v3h3v7h3v-7h3V9z"/></svg>
<span class="t" style="top:115.31px;font-size:23.8px;color:#fff;letter-spacing:0.663px;left:86.20px;">body</span>
<svg class="a" style="left:24.3px;top:170.49px" width="11" height="16.4" viewBox="0 0 11 16.4" fill="#c4c4c4"><circle cx="2" cy="2" r="1.9"/><circle cx="9" cy="2" r="1.9"/><circle cx="2" cy="8.2" r="1.9"/><circle cx="9" cy="8.2" r="1.9"/><circle cx="2" cy="14.4" r="1.9"/><circle cx="9" cy="14.4" r="1.9"/></svg>
<svg class="a" style="left:52.2px;top:170.59px" width="16.6" height="16.2" viewBox="4 4 16 16" preserveAspectRatio="none"><path fill="#b2b2b2" d="M20 10V8h-4V4h-2v4h-4V4H8v4H4v2h4v4H4v2h4v4h2v-4h4v4h2v-4h4v-2h-4v-4h4zm-6 4h-4v-4h4v4z"/></svg>
<span class="t" style="top:165.64px;font-size:23.8px;color:#fff;letter-spacing:0.143px;left:86.20px;">clientas</span>
<svg class="a" style="left:24.3px;top:220.82px" width="11" height="16.4" viewBox="0 0 11 16.4" fill="#c4c4c4"><circle cx="2" cy="2" r="1.9"/><circle cx="9" cy="2" r="1.9"/><circle cx="2" cy="8.2" r="1.9"/><circle cx="9" cy="8.2" r="1.9"/><circle cx="2" cy="14.4" r="1.9"/><circle cx="9" cy="14.4" r="1.9"/></svg>
<svg class="a" style="left:50.9px;top:221.42px" width="19.6" height="15.2" viewBox="2.5 4 19 15" preserveAspectRatio="none"><path fill="#b2b2b2" d="M2.5 4v3h5v12h3V7h5V4h-13zm19 5h-9v3h3v7h3v-7h3V9z"/></svg>
<span class="t" style="top:215.97px;font-size:23.8px;color:#fff;letter-spacing:0.459px;left:86.20px;">clientip</span>
<svg class="a" style="left:24.3px;top:271.15px" width="11" height="16.4" viewBox="0 0 11 16.4" fill="#c4c4c4"><circle cx="2" cy="2" r="1.9"/><circle cx="9" cy="2" r="1.9"/><circle cx="2" cy="8.2" r="1.9"/><circle cx="9" cy="8.2" r="1.9"/><circle cx="2" cy="14.4" r="1.9"/><circle cx="9" cy="14.4" r="1.9"/></svg>
<svg class="a" style="left:52.2px;top:271.25px" width="16.6" height="16.2" viewBox="4 4 16 16" preserveAspectRatio="none"><path fill="#b2b2b2" d="M20 10V8h-4V4h-2v4h-4V4H8v4H4v2h4v4H4v2h4v4h2v-4h4v4h2v-4h4v-2h-4v-4h4zm-6 4h-4v-4h4v4z"/></svg>
<span class="t" style="top:266.30px;font-size:23.8px;color:#fff;letter-spacing:-0.27px;left:86.20px;">code</span>
<svg class="a" style="left:24.3px;top:321.48px" width="11" height="16.4" viewBox="0 0 11 16.4" fill="#c4c4c4"><circle cx="2" cy="2" r="1.9"/><circle cx="9" cy="2" r="1.9"/><circle cx="2" cy="8.2" r="1.9"/><circle cx="9" cy="8.2" r="1.9"/><circle cx="2" cy="14.4" r="1.9"/><circle cx="9" cy="14.4" r="1.9"/></svg>
<svg class="a" style="left:52.2px;top:321.58px" width="16.6" height="16.2" viewBox="4 4 16 16" preserveAspectRatio="none"><path fill="#b2b2b2" d="M20 10V8h-4V4h-2v4h-4V4H8v4H4v2h4v4H4v2h4v4h2v-4h4v4h2v-4h4v-2h-4v-4h4zm-6 4h-4v-4h4v4z"/></svg>
<span class="t" style="top:316.63px;font-size:23.8px;color:#fff;letter-spacing:0.043px;left:86.20px;">dropped_attributes_count</span>
<svg class="a" style="left:24.3px;top:371.81px" width="11" height="16.4" viewBox="0 0 11 16.4" fill="#c4c4c4"><circle cx="2" cy="2" r="1.9"/><circle cx="9" cy="2" r="1.9"/><circle cx="2" cy="8.2" r="1.9"/><circle cx="9" cy="8.2" r="1.9"/><circle cx="2" cy="14.4" r="1.9"/><circle cx="9" cy="14.4" r="1.9"/></svg>
<svg class="a" style="left:52.2px;top:371.91px" width="16.6" height="16.2" viewBox="4 4 16 16" preserveAspectRatio="none"><path fill="#b2b2b2" d="M20 10V8h-4V4h-2v4h-4V4H8v4H4v2h4v4H4v2h4v4h2v-4h4v4h2v-4h4v-2h-4v-4h4zm-6 4h-4v-4h4v4z"/></svg>
<span class="t" style="top:366.96px;font-size:23.8px;color:#fff;letter-spacing:0.579px;left:86.20px;">floatvalue</span>
<svg class="a" style="left:24.3px;top:422.14px" width="11" height="16.4" viewBox="0 0 11 16.4" fill="#c4c4c4"><circle cx="2" cy="2" r="1.9"/><circle cx="9" cy="2" r="1.9"/><circle cx="2" cy="8.2" r="1.9"/><circle cx="9" cy="8.2" r="1.9"/><circle cx="2" cy="14.4" r="1.9"/><circle cx="9" cy="14.4" r="1.9"/></svg>
<svg class="a" style="left:50.9px;top:422.74px" width="19.6" height="15.2" viewBox="2.5 4 19 15" preserveAspectRatio="none"><path fill="#b2b2b2" d="M2.5 4v3h5v12h3V7h5V4h-13zm19 5h-9v3h3v7h3v-7h3V9z"/></svg>
<span class="t" style="top:417.29px;font-size:23.8px;color:#fff;letter-spacing:0.5px;left:86.20px;">job</span>
<svg class="a" style="left:24.3px;top:472.47px" width="11" height="16.4" viewBox="0 0 11 16.4" fill="#c4c4c4"><circle cx="2" cy="2" r="1.9"/><circle cx="9" cy="2" r="1.9"/><circle cx="2" cy="8.2" r="1.9"/><circle cx="9" cy="8.2" r="1.9"/><circle cx="2" cy="14.4" r="1.9"/><circle cx="9" cy="14.4" r="1.9"/></svg>
<svg class="a" style="left:50.9px;top:473.07px" width="19.6" height="15.2" viewBox="2.5 4 19 15" preserveAspectRatio="none"><path fill="#b2b2b2" d="M2.5 4v3h5v12h3V7h5V4h-13zm19 5h-9v3h3v7h3v-7h3V9z"/></svg>
<span class="t" style="top:467.62px;font-size:23.8px;color:#fff;letter-spacing:-0.186px;left:86.20px;">k8s_app_component</span>
<svg class="a" style="left:24.3px;top:522.80px" width="11" height="16.4" viewBox="0 0 11 16.4" fill="#c4c4c4"><circle cx="2" cy="2" r="1.9"/><circle cx="9" cy="2" r="1.9"/><circle cx="2" cy="8.2" r="1.9"/><circle cx="9" cy="8.2" r="1.9"/><circle cx="2" cy="14.4" r="1.9"/><circle cx="9" cy="14.4" r="1.9"/></svg>
<svg class="a" style="left:50.9px;top:523.40px" width="19.6" height="15.2" viewBox="2.5 4 19 15" preserveAspectRatio="none"><path fill="#b2b2b2" d="M2.5 4v3h5v12h3V7h5V4h-13zm19 5h-9v3h3v7h3v-7h3V9z"/></svg>
<span class="t" style="top:517.95px;font-size:23.8px;color:#fff;letter-spacing:-0.198px;left:86.20px;">k8s_app_instance</span>
<svg class="a" style="left:24.3px;top:573.13px" width="11" height="16.4" viewBox="0 0 11 16.4" fill="#c4c4c4"><circle cx="2" cy="2" r="1.9"/><circle cx="9" cy="2" r="1.9"/><circle cx="2" cy="8.2" r="1.9"/><circle cx="9" cy="8.2" r="1.9"/><circle cx="2" cy="14.4" r="1.9"/><circle cx="9" cy="14.4" r="1.9"/></svg>
<svg class="a" style="left:50.9px;top:573.73px" width="19.6" height="15.2" viewBox="2.5 4 19 15" preserveAspectRatio="none"><path fill="#b2b2b2" d="M2.5 4v3h5v12h3V7h5V4h-13zm19 5h-9v3h3v7h3v-7h3V9z"/></svg>
<span class="t" style="top:568.28px;font-size:23.8px;color:#fff;letter-spacing:-0.117px;left:86.20px;">k8s_cluster</span>
<svg class="a" style="left:24.3px;top:623.46px" width="11" height="16.4" viewBox="0 0 11 16.4" fill="#c4c4c4"><circle cx="2" cy="2" r="1.9"/><circle cx="9" cy="2" r="1.9"/><circle cx="2" cy="8.2" r="1.9"/><circle cx="9" cy="8.2" r="1.9"/><circle cx="2" cy="14.4" r="1.9"/><circle cx="9" cy="14.4" r="1.9"/></svg>
<svg class="a" style="left:50.9px;top:624.06px" width="19.6" height="15.2" viewBox="2.5 4 19 15" preserveAspectRatio="none"><path fill="#b2b2b2" d="M2.5 4v3h5v12h3V7h5V4h-13zm19 5h-9v3h3v7h3v-7h3V9z"/></svg>
<span class="t" style="top:618.61px;font-size:23.8px;color:#fff;letter-spacing:-0.175px;left:86.20px;">k8s_container_name</span>
<svg class="a" style="left:24.3px;top:673.79px" width="11" height="16.4" viewBox="0 0 11 16.4" fill="#c4c4c4"><circle cx="2" cy="2" r="1.9"/><circle cx="9" cy="2" r="1.9"/><circle cx="2" cy="8.2" r="1.9"/><circle cx="9" cy="8.2" r="1.9"/><circle cx="2" cy="14.4" r="1.9"/><circle cx="9" cy="14.4" r="1.9"/></svg>
<svg class="a" style="left:50.9px;top:674.39px" width="19.6" height="15.2" viewBox="2.5 4 19 15" preserveAspectRatio="none"><path fill="#b2b2b2" d="M2.5 4v3h5v12h3V7h5V4h-13zm19 5h-9v3h3v7h3v-7h3V9z"/></svg>
<span class="t" style="top:668.94px;font-size:23.8px;color:#fff;letter-spacing:-0.171px;left:86.20px;">k8s_container_image</span>
</div>
<div class="a" style="left:621.00px;top:470.50px;width:10.30px;height:254.70px;background:#5c60b3;"></div>
<div class="a" style="left:621.00px;top:725.20px;width:10.30px;height:408.80px;background:#c6c7e6;"></div>
<div class="a" style="left:609px;top:173.8px;width:36px;height:36px;border-radius:50%;background:#5c60b3;"></div>
<svg class="a" style="left:623.2px;top:185.6px" width="7.8" height="12.8" viewBox="0 0 7.8 12.8" fill="#fff"><circle cx="1.4" cy="1.4" r="1.35"/><circle cx="6.4" cy="1.4" r="1.35"/><circle cx="1.4" cy="6.4" r="1.35"/><circle cx="6.4" cy="6.4" r="1.35"/><circle cx="1.4" cy="11.4" r="1.35"/><circle cx="6.4" cy="11.4" r="1.35"/></svg>
<!-- axis rows -->
<div class="a" style="left:633.00px;top:238.00px;width:1829.00px;height:2.00px;background:#5c5e5d;"></div>
<div class="a" style="left:633.00px;top:303.00px;width:1829.00px;height:4.00px;background:#5c5e5d;"></div>
<div class="a" style="left:633.00px;top:368.00px;width:1829.00px;height:2.00px;background:#5c5e5d;"></div>
<div class="a" style="left:1591.00px;top:174.00px;width:2.00px;height:64.00px;background:#5c5e5d;"></div>
<span class="t" style="top:192.25px;font-size:25.1px;color:#fff;left:662.00px;">X-Axis (Row)</span>
<svg class="a" style="left:818.10px;top:193.70px" width="24.8" height="24.8" viewBox="0 0 24 24"><path fill="#fff" d="M11 7h2v2h-2zm0 4h2v6h-2zm1-9C6.48 2 2 6.48 2 12s4.48 10 10 10 10-4.48 10-10S17.52 2 12 2zm0 18c-4.41 0-8-3.59-8-8s3.59-8 8-8 8 3.59 8 8-3.59 8-8 8z"/></svg>
<span class="t" style="top:192.25px;font-size:25.1px;color:#fff;left:899.60px;">:</span>
<div class="a" style="left:912px;top:185px;width:331px;height:43px;border:1.5px solid #cfcfcf;border-radius:12px;overflow:hidden;background:#1a1a1d;"><div class="a" style="left:22.5px;top:0;width:273.00px;height:100%;background:#5c60b3;"></div></div>
<svg class="a" style="left:920.00px;top:197.00px" width="9.8" height="15" viewBox="0 0 9.8 15" fill="#e0e0e0"><circle cx="1.7" cy="1.7" r="1.7"/><circle cx="8.1" cy="1.7" r="1.7"/><circle cx="1.7" cy="7.5" r="1.7"/><circle cx="8.1" cy="7.5" r="1.7"/><circle cx="1.7" cy="13.3" r="1.7"/><circle cx="8.1" cy="13.3" r="1.7"/></svg>
<span class="t" style="top:197.50px;font-size:17.6px;color:#fff;left:951.00px;">HISTOGRAM(_timestamp)</span>
<svg class="a" style="left:1182.50px;top:203.10px" width="12.6" height="6.6" viewBox="0 0 10 5"><path fill="#fff" d="M0 0h10L5 5z"/></svg>
<svg class="a" style="left:1218.10px;top:198.60px" width="14.4" height="14.4" viewBox="0 0 14 14"><path d="M1 1L13 13M13 1L1 13" stroke="#fff" stroke-width="2.1" fill="none"/></svg>
<span class="t" style="top:192.31px;font-size:25.5px;color:#fff;left:1621.20px;">Breakdown</span>
<svg class="a" style="left:1757.60px;top:193.70px" width="24.8" height="24.8" viewBox="0 0 24 24"><path fill="#fff" d="M11 7h2v2h-2zm0 4h2v6h-2zm1-9C6.48 2 2 6.48 2 12s4.48 10 10 10 10-4.48 10-10S17.52 2 12 2zm0 18c-4.41 0-8-3.59-8-8s3.59-8 8-8 8 3.59 8 8-3.59 8-8 8z"/></svg>
<span class="t" style="top:192.25px;font-size:25.1px;color:#fff;left:1785.60px;">:</span>
<div class="a" style="left:1799px;top:185px;width:261.5px;height:43px;border:1.5px solid #cfcfcf;border-radius:12px;overflow:hidden;background:#1a1a1d;"><div class="a" style="left:22.5px;top:0;width:203.60px;height:100%;background:#5c60b3;"></div></div>
<svg class="a" style="left:1807.00px;top:197.00px" width="9.8" height="15" viewBox="0 0 9.8 15" fill="#e0e0e0"><circle cx="1.7" cy="1.7" r="1.7"/><circle cx="8.1" cy="1.7" r="1.7"/><circle cx="1.7" cy="7.5" r="1.7"/><circle cx="8.1" cy="7.5" r="1.7"/><circle cx="1.7" cy="13.3" r="1.7"/><circle cx="8.1" cy="13.3" r="1.7"/></svg>
<span class="t" style="top:197.50px;font-size:17.6px;color:#fff;left:1837.40px;">k8s_app_instance</span>
<svg class="a" style="left:1999.50px;top:203.10px" width="12.6" height="6.6" viewBox="0 0 10 5"><path fill="#fff" d="M0 0h10L5 5z"/></svg>
<svg class="a" style="left:2036.20px;top:198.60px" width="14.4" height="14.4" viewBox="0 0 14 14"><path d="M1 1L13 13M13 1L1 13" stroke="#fff" stroke-width="2.1" fill="none"/></svg>
<span class="t" style="top:258.05px;font-size:25.1px;color:#fff;left:662.00px;">Y-Axis (Columns)</span>
<svg class="a" style="left:864.10px;top:259.20px" width="24.8" height="24.8" viewBox="0 0 24 24"><path fill="#fff" d="M11 7h2v2h-2zm0 4h2v6h-2zm1-9C6.48 2 2 6.48 2 12s4.48 10 10 10 10-4.48 10-10S17.52 2 12 2zm0 18c-4.41 0-8-3.59-8-8s3.59-8 8-8 8 3.59 8 8-3.59 8-8 8z"/></svg>
<span class="t" style="top:258.05px;font-size:25.1px;color:#fff;left:899.60px;">:</span>
<div class="a" style="left:912px;top:250.3px;width:358px;height:42.69999999999999px;border:1.5px solid #cfcfcf;border-radius:12px;overflow:hidden;background:#1a1a1d;"><div class="a" style="left:22.5px;top:0;width:300.20px;height:100%;background:#5c60b3;"></div></div>
<svg class="a" style="left:920.00px;top:262.15px" width="9.8" height="15" viewBox="0 0 9.8 15" fill="#e0e0e0"><circle cx="1.7" cy="1.7" r="1.7"/><circle cx="8.1" cy="1.7" r="1.7"/><circle cx="1.7" cy="7.5" r="1.7"/><circle cx="8.1" cy="7.5" r="1.7"/><circle cx="1.7" cy="13.3" r="1.7"/><circle cx="8.1" cy="13.3" r="1.7"/></svg>
<span class="t" style="top:262.65px;font-size:17.6px;color:#fff;left:951.00px;">COUNT(k8s_container_name)</span>
<svg class="a" style="left:1209.50px;top:268.25px" width="12.6" height="6.6" viewBox="0 0 10 5"><path fill="#fff" d="M0 0h10L5 5z"/></svg>
<svg class="a" style="left:1245.80px;top:263.75px" width="14.4" height="14.4" viewBox="0 0 14 14"><path d="M1 1L13 13M13 1L1 13" stroke="#fff" stroke-width="2.1" fill="none"/></svg>
<div class="a" style="left:1285px;top:250.3px;width:230.4000000000001px;height:42.69999999999999px;border:1.5px solid #cfcfcf;border-radius:12px;overflow:hidden;background:#1a1a1d;"><div class="a" style="left:22.5px;top:0;width:172.80px;height:100%;background:#5c60b3;"></div></div>
<svg class="a" style="left:1293.00px;top:262.15px" width="9.8" height="15" viewBox="0 0 9.8 15" fill="#e0e0e0"><circle cx="1.7" cy="1.7" r="1.7"/><circle cx="8.1" cy="1.7" r="1.7"/><circle cx="1.7" cy="7.5" r="1.7"/><circle cx="8.1" cy="7.5" r="1.7"/><circle cx="1.7" cy="13.3" r="1.7"/><circle cx="8.1" cy="13.3" r="1.7"/></svg>
<span class="t" style="top:262.65px;font-size:17.6px;color:#fff;left:1324.00px;">COUNT(code)</span>
<svg class="a" style="left:1455.10px;top:268.25px" width="12.6" height="6.6" viewBox="0 0 10 5"><path fill="#fff" d="M0 0h10L5 5z"/></svg>
<svg class="a" style="left:1491.60px;top:263.75px" width="14.4" height="14.4" viewBox="0 0 14 14"><path d="M1 1L13 13M13 1L1 13" stroke="#fff" stroke-width="2.1" fill="none"/></svg>
<span class="t" style="top:322.84px;font-size:25px;color:#fff;left:662.40px;">Filters</span>
<span class="t" style="top:322.75px;font-size:25.1px;color:#fff;left:899.60px;">:</span>
<div class="a" style="left:927.2px;top:316.3px;width:42.6px;height:42.6px;border-radius:50%;background:#5c60b3;border:1.5px solid #d8d8e8;"></div>
<svg class="a" style="left:940.6px;top:329.7px" width="15.8" height="15.8" viewBox="0 0 16 16"><path d="M8 0.5V15.5M0.5 8H15.5" stroke="#fff" stroke-width="2.1"/></svg>
<svg class="a" style="left:659px;top:396px" width="38" height="35" viewBox="0 0 38 35"><path d="M2 2H27.5L17.8 14.6V27.6L11.8 22.8V14.6Z" fill="none" stroke="#fff" stroke-width="3.1" stroke-linejoin="round"/><path d="M29.3 20.3V34.2M22.3 27.2H36.4" stroke="#fff" stroke-width="3.2" fill="none"/></svg>
<!-- charts -->
<svg class="a" style="left:633px;top:440px" width="1829" height="300" viewBox="633 440 1829 300"><g stroke="#484856" stroke-width="1.5" fill="none"><rect x="798.9" y="530.9" width="305.8" height="122.1"/><path d="M798.9 536.4H1104.7"/><path d="M798.9 559.7H1104.7"/><path d="M798.9 583.1H1104.7"/><path d="M798.9 606.4H1104.7"/><path d="M798.9 629.7H1104.7"/><path d="M844.5 530.9V653.0"/><path d="M844.5 653.0V660.8" stroke="#b6b6c4" stroke-width="1.8"/><path d="M891.9 530.9V653.0"/><path d="M891.9 653.0V660.8" stroke="#b6b6c4" stroke-width="1.8"/><path d="M939.5 530.9V653.0"/><path d="M939.5 653.0V660.8" stroke="#b6b6c4" stroke-width="1.8"/><path d="M987.3 530.9V653.0"/><path d="M987.3 653.0V660.8" stroke="#b6b6c4" stroke-width="1.8"/><path d="M1035.3 530.9V653.0"/><path d="M1035.3 653.0V660.8" stroke="#b6b6c4" stroke-width="1.8"/><path d="M1083.6 530.9V653.0"/><path d="M1083.6 653.0V660.8" stroke="#b6b6c4" stroke-width="1.8"/></g><rect x="798.9" y="648.0" width="8.1" height="4.4" fill="#de7e76"/><rect x="822.8" y="648.0" width="8.1" height="4.4" fill="#de7e76"/><rect x="846.8" y="648.0" width="8.1" height="4.4" fill="#de7e76"/><rect x="870.7" y="648.0" width="8.1" height="4.4" fill="#de7e76"/><rect x="894.6" y="648.0" width="8.1" height="4.4" fill="#de7e76"/><rect x="918.5" y="648.0" width="8.1" height="4.4" fill="#de7e76"/><rect x="942.5" y="648.0" width="8.1" height="4.4" fill="#de7e76"/><rect x="966.4" y="648.0" width="8.1" height="4.4" fill="#de7e76"/><rect x="990.3" y="648.0" width="8.1" height="4.4" fill="#de7e76"/><rect x="1014.3" y="648.0" width="8.1" height="4.4" fill="#de7e76"/><rect x="1038.2" y="648.0" width="8.1" height="4.4" fill="#de7e76"/><rect x="1062.1" y="648.0" width="8.1" height="4.4" fill="#de7e76"/><rect x="1086.1" y="651.6" width="8.1" height="0.8" fill="#de7e76"/><text x="813.3" y="520.8" font-size="21.6" font-weight="700" fill="#e6e6ee">(K8s Container Name)</text><text x="844.5" y="685" font-size="21.3" text-anchor="middle" fill="#c2c2d2">02:00</text><text x="891.9" y="685" font-size="21.3" text-anchor="middle" fill="#c2c2d2">04:00</text><text x="939.5" y="685" font-size="21.3" text-anchor="middle" fill="#c2c2d2">06:00</text><text x="987.3" y="685" font-size="21.3" text-anchor="middle" fill="#c2c2d2">08:00</text><text x="1035.3" y="685" font-size="21.3" text-anchor="middle" fill="#c2c2d2">10:00</text><text x="1083.6" y="685" font-size="21.3" text-anchor="middle" fill="#c2c2d2">12:00</text><text x="951.8" y="714.6" font-size="21.2" font-weight="700" text-anchor="middle" fill="#c2c2d2">Timestamp</text><g stroke="#484856" stroke-width="1.5" fill="none"><rect x="1130.9" y="530.9" width="305.8" height="122.1"/><path d="M1130.9 536.4H1436.7"/><path d="M1130.9 559.7H1436.7"/><path d="M1130.9 583.1H1436.7"/><path d="M1130.9 606.4H1436.7"/><path d="M1130.9 629.7H1436.7"/><path d="M1176.5 530.9V653.0"/><path d="M1176.5 653.0V660.8" stroke="#b6b6c4" stroke-width="1.8"/><path d="M1223.9 530.9V653.0"/><path d="M1223.9 653.0V660.8" stroke="#b6b6c4" stroke-width="1.8"/><path d="M1271.5 530.9V653.0"/><path d="M1271.5 653.0V660.8" stroke="#b6b6c4" stroke-width="1.8"/><path d="M1319.3 530.9V653.0"/><path d="M1319.3 653.0V660.8" stroke="#b6b6c4" stroke-width="1.8"/><path d="M1367.3 530.9V653.0"/><path d="M1367.3 653.0V660.8" stroke="#b6b6c4" stroke-width="1.8"/><path d="M1415.6 530.9V653.0"/><path d="M1415.6 653.0V660.8" stroke="#b6b6c4" stroke-width="1.8"/></g><text x="1140.3" y="520.8" font-size="21.6" font-weight="700" fill="#e6e6ee">cert-manager</text><text x="1176.5" y="685" font-size="21.3" text-anchor="middle" fill="#c2c2d2">02:00</text><text x="1223.9" y="685" font-size="21.3" text-anchor="middle" fill="#c2c2d2">04:00</text><text x="1271.5" y="685" font-size="21.3" text-anchor="middle" fill="#c2c2d2">06:00</text><text x="1319.3" y="685" font-size="21.3" text-anchor="middle" fill="#c2c2d2">08:00</text><text x="1367.3" y="685" font-size="21.3" text-anchor="middle" fill="#c2c2d2">10:00</text><text x="1415.6" y="685" font-size="21.3" text-anchor="middle" fill="#c2c2d2">12:00</text><text x="1283.8" y="714.6" font-size="21.2" font-weight="700" text-anchor="middle" fill="#c2c2d2">Timestamp</text><g stroke="#484856" stroke-width="1.5" fill="none"><rect x="1463.5" y="530.9" width="305.8" height="122.1"/><path d="M1463.5 536.4H1769.3"/><path d="M1463.5 559.7H1769.3"/><path d="M1463.5 583.1H1769.3"/><path d="M1463.5 606.4H1769.3"/><path d="M1463.5 629.7H1769.3"/><path d="M1509.1 530.9V653.0"/><path d="M1509.1 653.0V660.8" stroke="#b6b6c4" stroke-width="1.8"/><path d="M1556.5 530.9V653.0"/><path d="M1556.5 653.0V660.8" stroke="#b6b6c4" stroke-width="1.8"/><path d="M1604.1 530.9V653.0"/><path d="M1604.1 653.0V660.8" stroke="#b6b6c4" stroke-width="1.8"/><path d="M1651.9 530.9V653.0"/><path d="M1651.9 653.0V660.8" stroke="#b6b6c4" stroke-width="1.8"/><path d="M1699.9 530.9V653.0"/><path d="M1699.9 653.0V660.8" stroke="#b6b6c4" stroke-width="1.8"/><path d="M1748.2 530.9V653.0"/><path d="M1748.2 653.0V660.8" stroke="#b6b6c4" stroke-width="1.8"/></g><rect x="1463.5" y="647.2" width="8.1" height="5.2" fill="#62b8ea"/><rect x="1487.4" y="645.9" width="8.1" height="6.5" fill="#62b8ea"/><rect x="1511.4" y="645.5" width="8.1" height="6.9" fill="#62b8ea"/><rect x="1535.3" y="645.1" width="8.1" height="7.3" fill="#62b8ea"/><rect x="1559.2" y="645.1" width="8.1" height="7.3" fill="#62b8ea"/><rect x="1583.2" y="645.9" width="8.1" height="6.5" fill="#62b8ea"/><rect x="1607.1" y="644.3" width="8.1" height="8.1" fill="#62b8ea"/><rect x="1631.0" y="645.5" width="8.1" height="6.9" fill="#62b8ea"/><rect x="1654.9" y="645.5" width="8.1" height="6.9" fill="#62b8ea"/><rect x="1678.9" y="644.3" width="8.1" height="8.1" fill="#62b8ea"/><rect x="1702.8" y="645.5" width="8.1" height="6.9" fill="#62b8ea"/><rect x="1726.7" y="644.3" width="8.1" height="8.1" fill="#62b8ea"/><rect x="1750.7" y="651.0" width="8.1" height="1.4" fill="#62b8ea"/><text x="1472.6" y="520.8" font-size="21.6" font-weight="700" fill="#e6e6ee">zo1</text><text x="1509.1" y="685" font-size="21.3" text-anchor="middle" fill="#c2c2d2">02:00</text><text x="1556.5" y="685" font-size="21.3" text-anchor="middle" fill="#c2c2d2">04:00</text><text x="1604.1" y="685" font-size="21.3" text-anchor="middle" fill="#c2c2d2">06:00</text><text x="1651.9" y="685" font-size="21.3" text-anchor="middle" fill="#c2c2d2">08:00</text><text x="1699.9" y="685" font-size="21.3" text-anchor="middle" fill="#c2c2d2">10:00</text><text x="1748.2" y="685" font-size="21.3" text-anchor="middle" fill="#c2c2d2">12:00</text><text x="1616.4" y="714.6" font-size="21.2" font-weight="700" text-anchor="middle" fill="#c2c2d2">Timestamp</text><g stroke="#484856" stroke-width="1.5" fill="none"><rect x="1796.2" y="530.9" width="305.8" height="122.1"/><path d="M1796.2 536.4H2102.0"/><path d="M1796.2 559.7H2102.0"/><path d="M1796.2 583.1H2102.0"/><path d="M1796.2 606.4H2102.0"/><path d="M1796.2 629.7H2102.0"/><path d="M1841.8 530.9V653.0"/><path d="M1841.8 653.0V660.8" stroke="#b6b6c4" stroke-width="1.8"/><path d="M1889.2 530.9V653.0"/><path d="M1889.2 653.0V660.8" stroke="#b6b6c4" stroke-width="1.8"/><path d="M1936.8 530.9V653.0"/><path d="M1936.8 653.0V660.8" stroke="#b6b6c4" stroke-width="1.8"/><path d="M1984.6 530.9V653.0"/><path d="M1984.6 653.0V660.8" stroke="#b6b6c4" stroke-width="1.8"/><path d="M2032.6 530.9V653.0"/><path d="M2032.6 653.0V660.8" stroke="#b6b6c4" stroke-width="1.8"/><path d="M2080.9 530.9V653.0"/><path d="M2080.9 653.0V660.8" stroke="#b6b6c4" stroke-width="1.8"/></g><rect x="1796.2" y="572.1" width="8.1" height="80.3" fill="#e69c98"/><rect x="1820.1" y="544.2" width="8.1" height="108.2" fill="#e69c98"/><rect x="1844.1" y="544.2" width="8.1" height="108.2" fill="#e69c98"/><rect x="1868.0" y="544.2" width="8.1" height="108.2" fill="#e69c98"/><rect x="1891.9" y="545.4" width="8.1" height="107.0" fill="#e69c98"/><rect x="1915.9" y="546.2" width="8.1" height="106.2" fill="#e69c98"/><rect x="1939.8" y="547.0" width="8.1" height="105.4" fill="#e69c98"/><rect x="1963.7" y="544.6" width="8.1" height="107.8" fill="#e69c98"/><rect x="1987.6" y="543.8" width="8.1" height="108.6" fill="#e69c98"/><rect x="2011.6" y="542.6" width="8.1" height="109.8" fill="#e69c98"/><rect x="2035.5" y="541.4" width="8.1" height="111.0" fill="#e69c98"/><rect x="2059.4" y="541.4" width="8.1" height="111.0" fill="#e69c98"/><rect x="2083.4" y="624.1" width="8.1" height="28.3" fill="#e69c98"/><text x="1805.2" y="520.8" font-size="21.6" font-weight="700" fill="#e6e6ee">ingress-nginx</text><text x="1841.8" y="685" font-size="21.3" text-anchor="middle" fill="#c2c2d2">02:00</text><text x="1889.2" y="685" font-size="21.3" text-anchor="middle" fill="#c2c2d2">04:00</text><text x="1936.8" y="685" font-size="21.3" text-anchor="middle" fill="#c2c2d2">06:00</text><text x="1984.6" y="685" font-size="21.3" text-anchor="middle" fill="#c2c2d2">08:00</text><text x="2032.6" y="685" font-size="21.3" text-anchor="middle" fill="#c2c2d2">10:00</text><text x="2080.9" y="685" font-size="21.3" text-anchor="middle" fill="#c2c2d2">12:00</text><text x="1949.1" y="714.6" font-size="21.2" font-weight="700" text-anchor="middle" fill="#c2c2d2">Timestamp</text><g stroke="#484856" stroke-width="1.5" fill="none"><rect x="2127.8" y="530.9" width="305.8" height="122.1"/><path d="M2127.8 536.4H2433.6"/><path d="M2127.8 559.7H2433.6"/><path d="M2127.8 583.1H2433.6"/><path d="M2127.8 606.4H2433.6"/><path d="M2127.8 629.7H2433.6"/><path d="M2173.4 530.9V653.0"/><path d="M2173.4 653.0V660.8" stroke="#b6b6c4" stroke-width="1.8"/><path d="M2220.8 530.9V653.0"/><path d="M2220.8 653.0V660.8" stroke="#b6b6c4" stroke-width="1.8"/><path d="M2268.4 530.9V653.0"/><path d="M2268.4 653.0V660.8" stroke="#b6b6c4" stroke-width="1.8"/><path d="M2316.2 530.9V653.0"/><path d="M2316.2 653.0V660.8" stroke="#b6b6c4" stroke-width="1.8"/><path d="M2364.2 530.9V653.0"/><path d="M2364.2 653.0V660.8" stroke="#b6b6c4" stroke-width="1.8"/><path d="M2412.5 530.9V653.0"/><path d="M2412.5 653.0V660.8" stroke="#b6b6c4" stroke-width="1.8"/></g><text x="2137.4" y="520.8" font-size="21.6" font-weight="700" fill="#e6e6ee">openobserve-collector....</text><text x="2173.4" y="685" font-size="21.3" text-anchor="middle" fill="#c2c2d2">02:00</text><text x="2220.8" y="685" font-size="21.3" text-anchor="middle" fill="#c2c2d2">04:00</text><text x="2268.4" y="685" font-size="21.3" text-anchor="middle" fill="#c2c2d2">06:00</text><text x="2316.2" y="685" font-size="21.3" text-anchor="middle" fill="#c2c2d2">08:00</text><text x="2364.2" y="685" font-size="21.3" text-anchor="middle" fill="#c2c2d2">10:00</text><text x="2412.5" y="685" font-size="21.3" text-anchor="middle" fill="#c2c2d2">12:00</text><text x="2280.7" y="714.6" font-size="21.2" font-weight="700" text-anchor="middle" fill="#c2c2d2">Timestamp</text><text x="788.6" y="543.3" font-size="21.1" text-anchor="end" fill="#c2c2d2">1500000.00</text><text x="788.6" y="566.6" font-size="21.1" text-anchor="end" fill="#c2c2d2">1200000.00</text><text x="788.6" y="590.0" font-size="21.1" text-anchor="end" fill="#c2c2d2">900000.00</text><text x="788.6" y="613.3" font-size="21.1" text-anchor="end" fill="#c2c2d2">600000.00</text><text x="788.6" y="636.6" font-size="21.1" text-anchor="end" fill="#c2c2d2">300000.00</text><text x="788.6" y="659.9" font-size="21.1" text-anchor="end" fill="#c2c2d2">0.00</text></svg>
<svg class="a" style="left:2331.5px;top:460.4px" width="24.5" height="24.5" viewBox="0 0 24 24"><circle cx="12" cy="12" r="11.3" fill="#d4d4d4"/><circle cx="12" cy="12" r="9.2" fill="#f6f6f6"/><path d="M12 5V12H17" stroke="#444" stroke-width="1.6" fill="none"/></svg>
<span class="t" style="top:460.71px;font-size:24.8px;color:#fff;letter-spacing:0.481px;left:2358.30px;">11s ago</span>
<!-- config panel -->
<div class="a" style="left:2462.00px;top:174.00px;width:10.00px;height:902.00px;background:#5c60b3;"></div>
<div class="a" style="left:2462.00px;top:1076.00px;width:10.00px;height:58.00px;background:#c6c7e6;"></div>
<div class="a" style="left:2472.00px;top:174.00px;width:2.00px;height:960.00px;background:#5c5e5d;"></div>
<span class="t" style="top:214.08px;font-size:24.6px;color:#fff;font-weight:700;letter-spacing:-0.535px;left:2492.30px;">Config</span>
<div class="a" style="left:2936.20px;top:201.20px;width:65.00px;height:54.60px;border:1.5px solid #c9c9c9;border-radius:7px;"></div>
<svg class="a" style="left:2954px;top:220.4px" width="29.4" height="16" viewBox="0 0 29.4 16"><path d="M1.5 1.2L8.6 8L1.5 14.8M27.9 1.2L20.8 8L27.9 14.8" stroke="#fff" stroke-width="3" fill="none"/></svg>
<div class="a" style="left:2474.00px;top:281.00px;width:528.00px;height:1.00px;background:#5c5e5d;"></div>
<span class="t" style="top:286.89px;font-size:25.65px;color:#fff;letter-spacing:0.02px;left:2492.30px;-webkit-text-stroke:0.85px #fff;">Description</span>
<div class="a" style="left:2492.00px;top:334.60px;width:494.00px;height:100.10px;background:#2a2a2d;"></div>
<span class="t" style="top:471.25px;font-size:26.4px;color:#b8b8b8;letter-spacing:0.268px;left:2493.20px;-webkit-text-stroke:0.85px #b8b8b8;">Trellis Layout</span>
<svg class="a" style="left:2662.00px;top:467.30px" width="36" height="36" viewBox="0 0 24 24"><path fill="#b8b8b8" d="M12 2C6.48 2 2 6.48 2 12s4.48 10 10 10 10-4.48 10-10S17.52 2 12 2zm1 15h-2v-6h2v6zm0-8h-2V7h2v2z"/></svg>
<div class="a" style="left:2492.00px;top:511.20px;width:494.00px;height:73.40px;border:2px solid #d2d2d2;"></div>
<span class="t" style="top:535.31px;font-size:25.5px;color:#fff;left:2515.00px;">Custom</span>
<svg class="a" style="left:2933.2px;top:544.2px" width="17.6" height="8.8" viewBox="0 0 10 5"><path fill="#b4b4b4" d="M0 0h10L5 5z"/></svg>
<span class="t" style="top:603.11px;font-size:26.21px;color:#b8b8b8;letter-spacing:0.014px;left:2493.20px;-webkit-text-stroke:0.85px #b8b8b8;">Columns per Row</span>
<svg class="a" style="left:2711.50px;top:599.30px" width="36" height="36" viewBox="0 0 24 24"><path fill="#b8b8b8" d="M12 2C6.48 2 2 6.48 2 12s4.48 10 10 10 10-4.48 10-10S17.52 2 12 2zm1 15h-2v-6h2v6zm0-8h-2V7h2v2z"/></svg>
<div class="a" style="left:2492.00px;top:643.60px;width:480.50px;height:71.40px;border:1.5px solid #d2d2d2;"></div>
<span class="t" style="top:666.21px;font-size:25.5px;color:#fff;left:2515.60px;">5</span>
<div class="a" style="left:2487.00px;top:717.20px;width:505.20px;height:113.60px;border:8px solid #e63f26;"></div>
<div class="a" style="left:2513.70px;top:756.90px;width:39.30px;height:24.60px;background:#424571;border-radius:12.3px;"></div>
<div class="a" style="left:2539.1px;top:751.3px;width:35.8px;height:35.8px;border-radius:50%;background:#5c60b3;"></div>
<span class="t" style="top:755.16px;font-size:25.8px;color:#fff;letter-spacing:0.12px;left:2592.50px;">Group multi Y-axis for trellis</span>
<svg class="a" style="left:2917.30px;top:750.50px" width="36.4" height="36.4" viewBox="0 0 24 24"><path fill="#fff" d="M12 2C6.48 2 2 6.48 2 12s4.48 10 10 10 10-4.48 10-10S17.52 2 12 2zm1 15h-2v-6h2v6zm0-8h-2V7h2v2z"/></svg>
<div class="a" style="left:2513.70px;top:842.50px;width:39.30px;height:24.60px;background:#424571;border-radius:12.3px;"></div>
<div class="a" style="left:2539.1px;top:836.9px;width:35.8px;height:35.8px;border-radius:50%;background:#5c60b3;"></div>
<span class="t" style="top:841.77px;font-size:25.2px;color:#fff;letter-spacing:0.07px;left:2592.50px;">Show Legends</span>
<span class="t" style="top:918.10px;font-size:26.22px;color:#b8b8b8;letter-spacing:0.013px;left:2493.20px;-webkit-text-stroke:0.85px #b8b8b8;">Legends Positions</span>
<div class="a" style="left:2492.00px;top:956.00px;width:494.00px;height:64.80px;background:#2a2a2d;border:2px solid #d2d2d2;"></div>
<span class="t" style="top:973.49px;font-size:26px;color:#fff;letter-spacing:1.004px;left:2515.00px;">Auto</span>
<svg class="a" style="left:2938.4px;top:981.8px" width="14.8" height="8.4" viewBox="0 0 10 5"><path fill="#b4b4b4" d="M0 0h10L5 5z"/></svg>
<span class="t" style="top:1065.95px;font-size:26.4px;color:#b8b8b8;letter-spacing:0.517px;left:2493.20px;-webkit-text-stroke:0.85px #b8b8b8;">Unit</span>
<div class="a" style="left:2492.00px;top:1103.20px;width:494.00px;height:64.80px;background:#2a2a2d;border:2px solid #d2d2d2;"></div>
<span class="t" style="top:1121.89px;font-size:26px;color:#fff;letter-spacing:0.603px;left:2515.00px;">Default</span>
<svg class="a" style="left:2938.4px;top:1129px" width="14.8" height="8.4" viewBox="0 0 10 5"><path fill="#b4b4b4" d="M0 0h10L5 5z"/></svg>
</div></body></html>
